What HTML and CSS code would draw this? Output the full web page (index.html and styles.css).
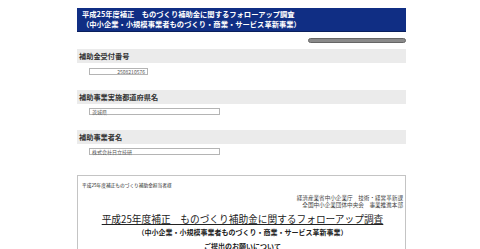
FILE: index.html
```html
<!DOCTYPE html>
<html lang="ja">
<head>
  <meta charset="UTF-8">
  <title>フォローアップ調査</title>
  <link rel="stylesheet" href="styles.css">
</head>
<body>
  <div id="wrap">
    <div class="titlebar">
      平成25年度補正　ものづくり補助金に関するフォローアップ調査<br>
      （中小企業・小規模事業者ものづくり・商業・サービス革新事業）
    </div>
    <div class="progress"></div>

    <div class="head first">補助金受付番号</div>
    <div class="field short right">2508210576</div>

    <div class="head">補助事業実施都道府県名</div>
    <div class="field">茨城県</div>

    <div class="head">補助事業者名</div>
    <div class="field">株式会社日立技研</div>

    <div class="letter">
      <div class="to">平成25年度補正ものづくり補助金担当者様</div>
      <div class="from">
        経済産業省中小企業庁　技術・経営革新課<br>
        全国中小企業団体中央会　事業推進本部
      </div>
      <div class="ltitle">平成25年度補正　ものづくり補助金に関するフォローアップ調査</div>
      <div class="lsub">（中小企業・小規模事業者ものづくり・商業・サービス革新事業）</div>
      <div class="lsub2">ご提出のお願いについて</div>
    </div>
  </div>
</body>
</html>
```

FILE: styles.css
```css
body{
  margin:0;
  background:#fff;
  font-family:"Noto Sans CJK JP","Liberation Sans",sans-serif;
  color:#222;
}
#wrap{
  width:329px;
  margin-left:77px;
  padding-top:8px;
}
.titlebar{
  background:#102e84;
  border-bottom:1px solid #0a1f5c;
  color:#fff;
  font-weight:bold;
  font-size:7.3px;
  line-height:9.5px;
  padding:2px 5px 2px 5px;
  white-space:nowrap;
}
.progress{
  width:96px;
  height:3px;
  margin:6px 0 0 auto;
  background:#8a8a8a;
  border:1px solid #666;
  border-radius:3px;
}
.head{
  background:#ebebeb;
  height:14px;
  line-height:14px;
  padding-left:2px;
  font-size:7.2px;
  font-weight:bold;
  color:#333;
  margin-top:15px;
}
.head.first{
  margin-top:6px;
}
.field{
  box-sizing:border-box;
  width:131px;
  height:7px;
  margin:4px 0 0 12px;
  border:1px solid #b4b4b4;
  padding:0 2px;
  font-size:5px;
  line-height:5px;
  color:#555;
  white-space:nowrap;
}
.field.short{
  width:59px;
  margin-top:5px;
}
.right{
  text-align:right;
}
.letter{
  margin-top:20px;
  border:1px solid #c4c4c4;
  height:80px;
  padding:6px 2px 0 4px;
  overflow:hidden;
}
.to{
  font-size:4.7px;
  line-height:7px;
}
.from{
  margin-top:6px;
  text-align:right;
  font-size:5.6px;
  line-height:7px;
  color:#444;
}
.ltitle{
  margin-top:4px;
  text-align:center;
  font-size:9.7px;
  line-height:12px;
  text-decoration:underline;
  white-space:nowrap;
}
.lsub{
  margin-top:3px;
  text-align:center;
  font-size:7px;
  line-height:8px;
  font-weight:bold;
  white-space:nowrap;
}
.lsub2{
  margin-top:5px;
  text-align:center;
  font-size:7px;
  line-height:10px;
  font-weight:bold;
}
```
